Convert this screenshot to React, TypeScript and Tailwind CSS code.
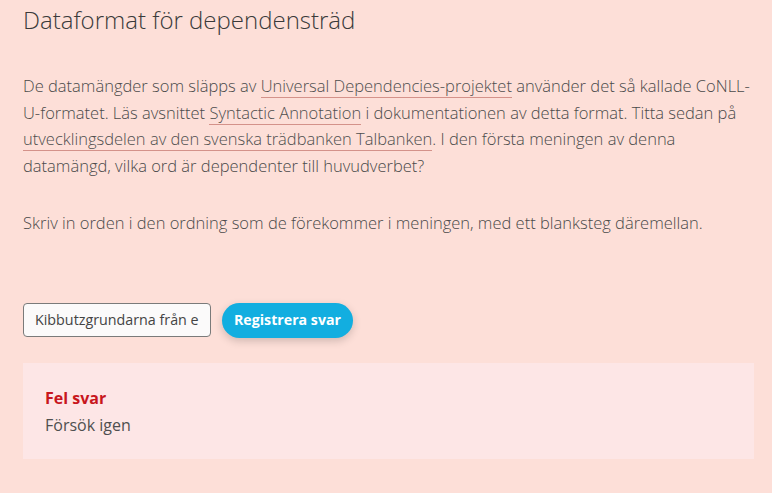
import React from "react";

const linkCls = "border-b border-[#d4928a] text-[#4e4e4e]";

export default function App() {
  return (
    <div className="w-[772px] h-[493px] bg-[#fddfd8] overflow-hidden" style={{ fontFamily: '"Open Sans", sans-serif' }}>
      <div className="flex flex-col pl-[23px] pr-[18px]">
        <h1 className="mt-[4px] text-[24px] leading-[32px] font-light text-[#3a3a3a]">Dataformat för dependensträd</h1>
        <p className="mt-[37px] text-[16.5px] leading-[26.5px] font-light text-[#4a4a4a]">
          De datamängder som släpps av <span className={linkCls}>Universal Dependencies-projektet</span> använder det så kallade CoNLL-U-formatet. Läs avsnittet <span className={linkCls}>Syntactic Annotation</span> i dokumentationen av detta format. Titta sedan på <span className={linkCls}>utvecklingsdelen av den svenska trädbanken Talbanken</span>. I den första meningen av denna datamängd, vilka ord är dependenter till huvudverbet?
        </p>
        <p className="mt-[31px] text-[16.5px] leading-[26.5px] font-light text-[#4a4a4a]">
          Skriv in orden i den ordning som de förekommer i meningen, med ett blanksteg däremellan.
        </p>
        <div className="mt-[66px] flex items-center gap-[11px]">
          <div className="w-[188px] h-[34px] border border-[#7a7a7a] rounded-[4px] bg-[#fbfafa] px-[11px] flex items-center overflow-hidden whitespace-nowrap text-[14.3px] text-[#444]">
            Kibbutzgrundarna från e
          </div>
          <button className="h-[35px] px-[12px] rounded-full bg-[#12aee0] text-white font-bold text-[14.2px] shadow-[0_3px_8px_rgba(0,0,0,0.18)]">
            Registrera svar
          </button>
        </div>
        <div className="mt-[25px] w-[731px] h-[96px] bg-[#fde6e6] px-[22px] pt-[22px]">
          <div className="text-[16px] leading-[27px] font-bold text-[#c8161d]">Fel svar</div>
          <div className="text-[16px] leading-[27px] text-[#4f4f4f]">Försök igen</div>
        </div>
      </div>
    </div>
  );
}
